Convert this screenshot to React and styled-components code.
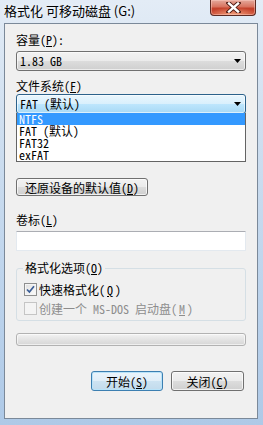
import React from 'react';
import styled, { createGlobalStyle } from 'styled-components';

const UI_FONT = `"Noto Sans Mono CJK SC", "Noto Sans CJK SC", monospace`;

const GlobalStyle = createGlobalStyle`
    html, body {
        margin: 0;
        padding: 0;
    }
    body {
        width: 263px;
        height: 425px;
        overflow: hidden;
        background: #b9d1ea;
    }
`;

const Styled = {
    Window: styled.div`
        width: 263px;
        height: 425px;
        box-sizing: border-box;
        display: flex;
        flex-direction: column;
        padding: 0 5px 6px 4px;
        background: linear-gradient(180deg, #e3ecf6 0%, #cfdff0 30%, #bcd3ec 70%, #aec9e7 100%);
        font-family: ${UI_FONT};
        font-size: 12px;
        color: #000;
    `,
    TitleBar: styled.div`
        height: 23px;
        display: flex;
        align-items: flex-start;
    `,
    Title: styled.div`
        margin-top: 2px;
        font-family: "Noto Sans CJK SC", sans-serif;
        font-size: 13px;
        line-height: 18px;
        color: #000;
        white-space: nowrap;
        text-shadow: 0 0 6px rgba(255, 255, 255, 0.9);
    `,
    CloseButton: styled.div`
        margin-left: auto;
        margin-right: 2px;
        width: 46px;
        height: 16px;
        box-sizing: border-box;
        border: 1px solid #5c2a22;
        border-top: none;
        border-radius: 0 0 4px 4px;
        display: flex;
        align-items: center;
        justify-content: center;
        background:
            radial-gradient(ellipse 60% 50% at 50% 100%, rgba(255, 190, 150, 0.8), rgba(255, 190, 150, 0) 100%),
            linear-gradient(180deg, #e4a99c 0%, #d8735f 45%, #c3412b 55%, #c8432c 100%);
        box-shadow: inset 0 0 0 1px rgba(255, 210, 200, 0.45);
    `,
    Client: styled.div`
        flex: 1;
        display: flex;
        flex-direction: column;
        padding: 0 11px;
        background: #f0f0f0;
        border: 1px solid #7b8999;
    `,
    Label: styled.div`
        margin-top: ${({ $top }) => $top}px;
        height: 16px;
        line-height: 16px;
        white-space: nowrap;
    `,
    Key: styled.span`
        text-decoration: underline;
        text-underline-offset: 1px;
    `,
    ComboWrap: styled.div`
        position: relative;
        margin-top: ${({ $top }) => $top}px;
    `,
    Combo: styled.div`
        height: 20px;
        box-sizing: border-box;
        display: flex;
        align-items: center;
        padding: 0 4px 0 3px;
        border: 1px solid ${({ $open }) => ($open ? '#2c628b' : '#707070')};
        border-radius: 3px;
        line-height: 18px;
        white-space: nowrap;
        background: ${({ $open }) => ($open
        ? 'linear-gradient(180deg, #eaf6fd 0%, #d9f0fc 50%, #bee6fd 50%, #a7d9f5 100%)'
        : 'linear-gradient(180deg, #f2f2f2 0%, #ebebeb 50%, #dddddd 50%, #cfcfcf 100%)')};
        box-shadow: inset 0 0 0 1px rgba(255, 255, 255, 0.6);
    `,
    Arrow: styled.svg`
        margin-left: auto;
        flex: none;
    `,
    DropList: styled.div`
        position: absolute;
        left: 0;
        right: 0;
        top: 19px;
        z-index: 5;
        box-sizing: border-box;
        border: 1px solid #646464;
        border-top: none;
        background: #fff;
    `,
    ListRow: styled.div`
        height: 12px;
        line-height: 12px;
        padding-left: 2px;
        white-space: nowrap;
        background: ${({ $selected }) => ($selected ? '#3399ff' : 'transparent')};
        color: ${({ $selected }) => ($selected ? '#fff' : '#000')};
    `,
    Button: styled.div`
        width: ${({ $width }) => $width}px;
        height: ${({ $height }) => $height || 20}px;
        box-sizing: border-box;
        margin-top: ${({ $top }) => $top || 0}px;
        display: flex;
        align-items: center;
        justify-content: center;
        white-space: nowrap;
        border: 1px solid ${({ $default }) => ($default ? '#3c7fb1' : '#707070')};
        border-radius: 3px;
        background: ${({ $default }) => ($default
        ? 'linear-gradient(180deg, #eaf4fb 0%, #e0eef8 50%, #cde3f2 50%, #c2dbec 100%)'
        : 'linear-gradient(180deg, #f2f2f2 0%, #ebebeb 50%, #dddddd 50%, #cfcfcf 100%)')};
        box-shadow: inset 0 0 0 1px ${({ $default }) => ($default ? '#b9e3f9' : 'rgba(255, 255, 255, 0.7)')};
    `,
    TextBox: styled.div`
        margin-top: 3px;
        height: 20px;
        box-sizing: border-box;
        background: #fff;
        border: 1px solid #e3e9ef;
        border-top-color: #abadb3;
        border-radius: 1px;
    `,
    Group: styled.fieldset`
        margin: 10px 0 0;
        min-width: 0;
        padding: 8px 7px 5px;
        border: 1px solid #d5dfe5;
        border-radius: 3px;
        display: flex;
        flex-direction: column;
        gap: 6px;
    `,
    Legend: styled.legend`
        padding: 0 2px;
        margin-left: -1px;
        line-height: 14px;
        height: 14px;
        white-space: nowrap;
    `,
    CheckRow: styled.div`
        display: flex;
        align-items: center;
        gap: 2px;
        height: 13px;
        line-height: 13px;
        white-space: nowrap;
        color: ${({ $disabled }) => ($disabled ? '#8d8d8d' : '#000')};
    `,
    CheckBox: styled.div`
        width: 13px;
        height: 13px;
        flex: none;
        box-sizing: border-box;
        display: flex;
        align-items: center;
        justify-content: center;
        border: 1px solid ${({ $disabled }) => ($disabled ? '#c5c5c5' : '#8e8f8f')};
        background: ${({ $disabled }) => ($disabled
        ? '#f4f4f4'
        : 'linear-gradient(135deg, #dcdcdc 0%, #f0f0f0 50%, #fbfbfb 100%)')};
        box-shadow: inset 0 0 0 1px ${({ $disabled }) => ($disabled ? '#f4f4f4' : '#f5f5f5')};
    `,
    Progress: styled.div`
        margin-top: 12px;
        height: 13px;
        box-sizing: border-box;
        border: 1px solid #b2b2b2;
        border-radius: 3px;
        background: linear-gradient(180deg, #f3f3f3 0%, #e5e5e5 45%, #d6d6d6 100%);
        box-shadow: inset 0 0 0 1px rgba(255, 255, 255, 0.6);
    `,
    Actions: styled.div`
        margin-top: 25px;
        margin-right: 2px;
        display: flex;
        justify-content: flex-end;
        gap: 8px;
    `,
};

function DropArrow() {
    return (
        <Styled.Arrow width="7" height="4" viewBox="0 0 7 4">
            <polygon points="0,0 7,0 3.5,4" fill="#000" />
        </Styled.Arrow>
    );
}

function CloseGlyph() {
    return (
        <svg width="15" height="11" viewBox="0 0 15 11">
            <path d="M2.5 1 L12.5 10 M12.5 1 L2.5 10" stroke="#4a1810" strokeWidth="4.2" strokeLinecap="square" />
            <path d="M3 1.5 L12 9.5 M12 1.5 L3 9.5" stroke="#fff" strokeWidth="2.4" strokeLinecap="square" />
        </svg>
    );
}

function Check() {
    return (
        <svg width="9" height="9" viewBox="0 0 9 9">
            <path d="M1 4.5 L3.4 7 L8 1.2" fill="none" stroke="#3a5d96" strokeWidth="1.7" />
        </svg>
    );
}

const fileSystems = ['NTFS', 'FAT (默认)', 'FAT32', 'exFAT'];

function App() {
    return (
        <Styled.Window>
            <GlobalStyle />
            <Styled.TitleBar>
                <Styled.Title>格式化 可移动磁盘 (G:)</Styled.Title>
                <Styled.CloseButton>
                    <CloseGlyph />
                </Styled.CloseButton>
            </Styled.TitleBar>
            <Styled.Client>
                <Styled.Label $top={8}>容量(<Styled.Key>P</Styled.Key>):</Styled.Label>
                <Styled.ComboWrap $top={3}>
                    <Styled.Combo>
                        1.83 GB
                        <DropArrow />
                    </Styled.Combo>
                </Styled.ComboWrap>

                <Styled.Label $top={7}>文件系统(<Styled.Key>F</Styled.Key>)</Styled.Label>
                <Styled.ComboWrap $top={0}>
                    <Styled.Combo $open>
                        FAT (默认)
                        <DropArrow />
                    </Styled.Combo>
                    <Styled.DropList>
                        {fileSystems.map((fs, i) => (
                            <Styled.ListRow key={fs} $selected={i === 0}>{fs}</Styled.ListRow>
                        ))}
                    </Styled.DropList>
                </Styled.ComboWrap>

                <Styled.Button $width={132} $height={18} $top={64}>
                    还原设备的默认值(<Styled.Key>D</Styled.Key>)
                </Styled.Button>

                <Styled.Label $top={16}>卷标(<Styled.Key>L</Styled.Key>)</Styled.Label>
                <Styled.TextBox />

                <Styled.Group>
                    <Styled.Legend>格式化选项(<Styled.Key>O</Styled.Key>)</Styled.Legend>
                    <Styled.CheckRow>
                        <Styled.CheckBox><Check /></Styled.CheckBox>
                        快速格式化(<Styled.Key>Q</Styled.Key>)
                    </Styled.CheckRow>
                    <Styled.CheckRow $disabled>
                        <Styled.CheckBox $disabled />
                        创建一个 MS-DOS 启动盘(<Styled.Key>M</Styled.Key>)
                    </Styled.CheckRow>
                </Styled.Group>

                <Styled.Progress />

                <Styled.Actions>
                    <Styled.Button $width={72} $default>开始(<Styled.Key>S</Styled.Key>)</Styled.Button>
                    <Styled.Button $width={73}>关闭(<Styled.Key>C</Styled.Key>)</Styled.Button>
                </Styled.Actions>
            </Styled.Client>
        </Styled.Window>
    );
}

export default App;
